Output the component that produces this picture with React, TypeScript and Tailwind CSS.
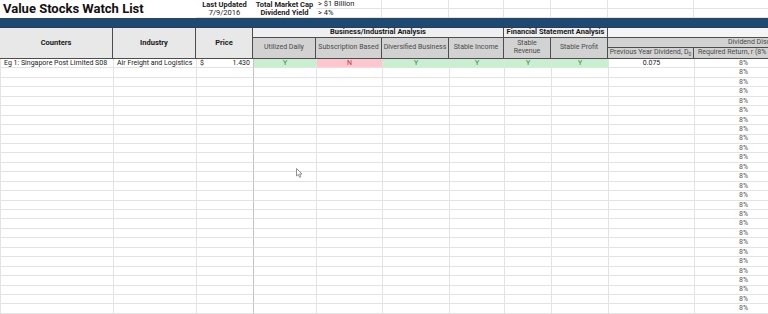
import React from "react";

const cols =
  "grid-cols-[113px_83px_57px_63px_66px_67px_55px_47px_57px_86px_98px_160px]";

const hd = "border-r border-b border-[#4d4d4d] flex items-center justify-center text-center leading-[1.1]";
const sub = hd + " bg-[#d2d2d2] text-[#4a4a4a]";
const light = "border-r border-b border-[#e3e3e3]";

type Row = {
  counter?: string;
  industry?: string;
  price?: string;
  flags?: ("Y" | "N")[];
  div?: string;
};

const rows: Row[] = [
  {
    counter: "Eg 1: Singapore Post Limited S08",
    industry: "Air Freight and Logistics",
    price: "1.430",
    flags: ["Y", "N", "Y", "Y", "Y", "Y"],
    div: "0.075",
  },
  ...Array.from({ length: 27 }, () => ({})),
];

function Flag({ v }: { v?: "Y" | "N" }) {
  if (!v) return <div className={light} />;
  const yes = v === "Y";
  return (
    <div
      className={`${light} flex items-center justify-center ${
        yes ? "bg-[#c8efcf] text-[#2f8a3a]" : "bg-[#ffc7cd] text-[#c0303e]"
      }`}
    >
      {v}
    </div>
  );
}

function App() {
  return (
    <div
      className="relative w-[768px] h-[314px] overflow-hidden bg-white text-[7px] text-[#1a1a1a]"
      style={{ fontFamily: "Roboto, 'Liberation Sans', sans-serif" }}
    >
      {/* header block */}
      <div className={`grid ${cols} grid-rows-[9px_9px_10px_10px_10px_11px] w-[952px]`}>
        <div className="col-span-2 row-span-2 flex items-center pl-[3px] text-[13px] font-bold text-[#111]">
          Value Stocks Watch List
        </div>
        <div className="flex items-center justify-center font-bold text-[7.5px]">Last Updated</div>
        <div className="flex items-center justify-center font-bold text-[7.5px]">Total Market Cap</div>
        <div className={`${light} flex items-center pl-[2px] text-[7.5px]`}>&gt; $1 Billion</div>
        <div className={light} />
        <div className={light} />
        <div className={light} />
        <div className={light} />
        <div className={light} />
        <div className={light} />
        <div className={light} />
        <div className="border-b border-[#e3e3e3] flex items-center justify-center text-[7.5px]">7/9/2016</div>
        <div className="border-b border-[#e3e3e3] flex items-center justify-center font-bold text-[7.5px]">Dividend Yield</div>
        <div className={`${light} flex items-center pl-[2px] text-[7.5px]`}>&gt; 4%</div>
        <div className={light} />
        <div className={light} />
        <div className={light} />
        <div className={light} />
        <div className={light} />
        <div className={light} />
        <div className={light} />

        <div className="col-span-12 bg-[#1d4a75] border-b border-[#3a3a3a]" />

        <div className={`${hd} row-span-3 bg-[#e8e8e8] font-bold text-[7.5px]`}>Counters</div>
        <div className={`${hd} row-span-3 bg-[#e8e8e8] font-bold text-[7.5px]`}>Industry</div>
        <div className={`${hd} row-span-3 bg-[#e8e8e8] font-bold text-[7.5px]`}>Price</div>
        <div className={`${hd} col-span-4 bg-[#efefef] font-bold text-[7.5px]`}>Business/Industrial Analysis</div>
        <div className={`${hd} col-span-2 bg-[#efefef] font-bold text-[7.5px]`}>Financial Statement Analysis</div>
        <div className={`${hd} col-span-3 bg-[#f4f4f4]`} />

        <div className={`${sub} row-span-2`}>Utilized Daily</div>
        <div className={`${sub} row-span-2`}>Subscription Based</div>
        <div className={`${sub} row-span-2`}>Diversified Business</div>
        <div className={`${sub} row-span-2`}>Stable Income</div>
        <div className={`${sub} row-span-2`}>
          Stable
          <br />
          Revenue
        </div>
        <div className={`${sub} row-span-2`}>Stable Profit</div>
        <div className={`${sub} col-span-3 !justify-start pl-[120px]`}>Dividend Discount Model (DDM)</div>
        <div className={sub}>
          Previous Year Dividend, D<sub className="text-[5px]">0</sub>
        </div>
        <div className={`${sub} !justify-start pl-[4px] whitespace-nowrap`}>Required Return, r (8% default)</div>
        <div className={sub} />
      </div>

      {/* body rows */}
      <div className={`grid ${cols} auto-rows-[9.45px] w-[952px] border-l border-[#e3e3e3]`}>
        {rows.map((r, i) => (
          <React.Fragment key={i}>
            <div className={`${light} flex items-center pl-[3px] whitespace-nowrap`}>{r.counter}</div>
            <div className={`${light} flex items-center pl-[3px] whitespace-nowrap`}>{r.industry}</div>
            <div className={`${light} !border-r-[#c4c4c4] flex items-center justify-between px-[3px]`}>
              {r.price && (
                <>
                  <span>$</span>
                  <span>{r.price}</span>
                </>
              )}
            </div>
            {[0, 1, 2, 3, 4, 5].map((k) => (
              <Flag key={k} v={r.flags?.[k]} />
            ))}
            <div className={`${light} flex items-center justify-center`}>{r.div}</div>
            <div className={`${light} flex items-center justify-center text-[#555]`}>8%</div>
            <div className={light} />
          </React.Fragment>
        ))}
      </div>

      {/* mouse pointer */}
      <svg className="absolute left-[296px] top-[168px]" width="7" height="10" viewBox="0 0 7 10">
        <path d="M0.5 0.5 L0.5 8 L2.3 6.4 L3.6 9.3 L4.8 8.8 L3.6 6 L6 6 Z" fill="#fff" stroke="#777" strokeWidth="0.8" />
      </svg>
    </div>
  );
}

export default App;
